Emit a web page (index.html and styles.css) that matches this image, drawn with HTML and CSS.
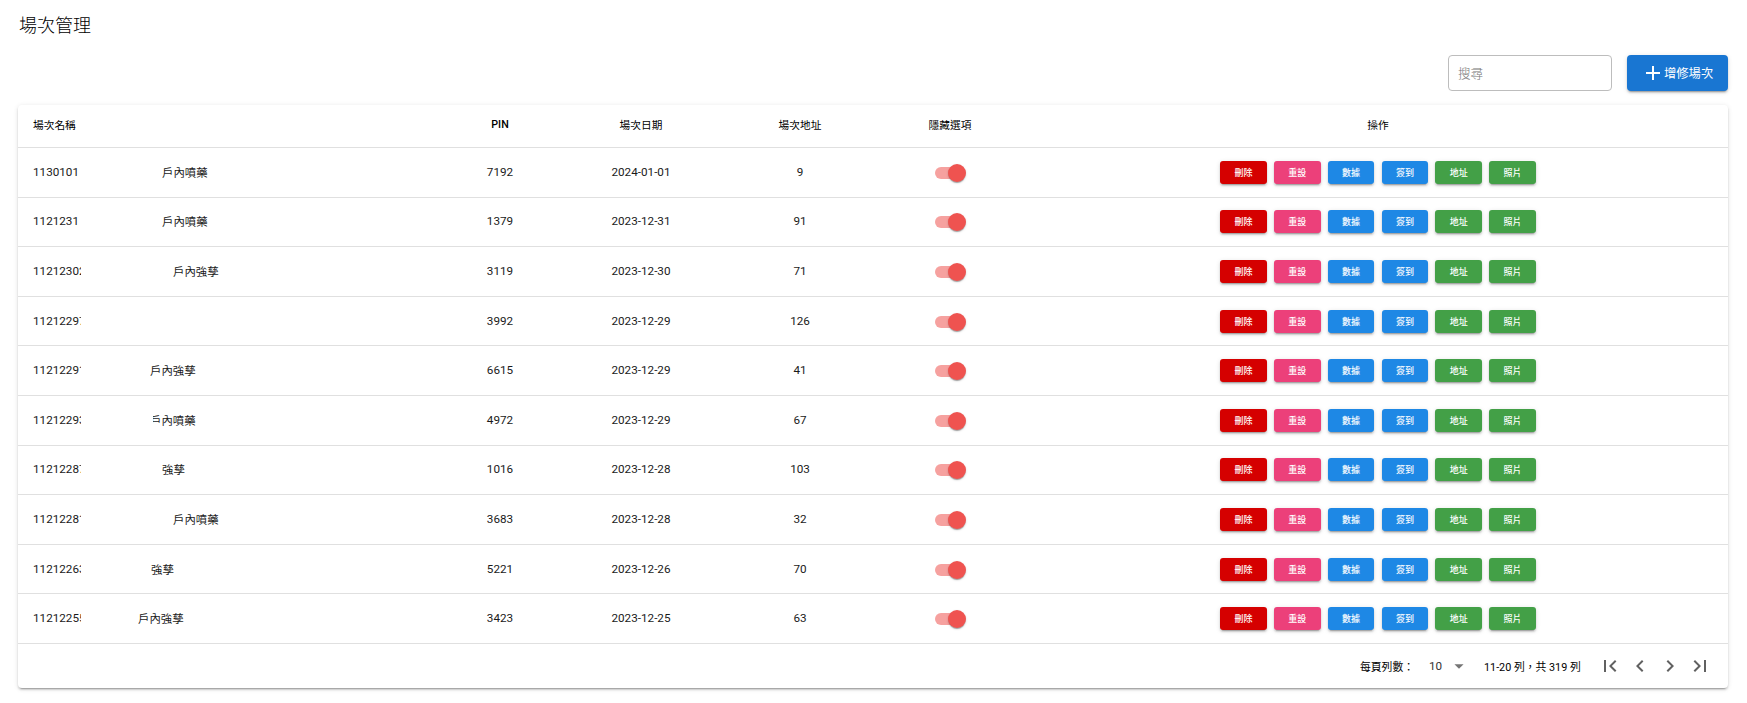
FILE: index.html
```html
<!DOCTYPE html>
<html lang="zh-Hant">
<head>
<meta charset="utf-8">
<title>場次管理</title>
<link rel="stylesheet" href="styles.css">
</head>
<body>
<main class="page">
  <h1 class="title">場次管理</h1>
  <div class="toolbar">
    <input class="search" type="text" placeholder="搜尋">
    <button class="add" type="button">
      <svg class="add-icon" viewBox="0 0 14 14"><path d="M6 0h2v6h6v2H8v6H6V8H0V6h6z"/></svg>
      <span>增修場次</span>
    </button>
  </div>
  <section class="card">
    <div class="row head">
      <div class="name">場次名稱</div>
      <div class="c pin-head">PIN</div>
      <div class="c">場次日期</div>
      <div class="c">場次地址</div>
      <div class="c">隱藏選項</div>
      <div class="c">操作</div>
    </div>

    <div class="row">
      <div class="name"><span class="id">1130101</span><span class="note" style="margin-left:81px">戶內噴藥</span></div>
      <div class="c">7192</div><div class="c">2024-01-01</div><div class="c">9</div>
      <div class="c"><span class="switch"><i class="track"></i><i class="thumb"></i></span></div>
      <div class="actions"><span class="btn red">刪除</span><span class="btn pink">重設</span><span class="btn blue">數據</span><span class="btn blue">簽到</span><span class="btn green">地址</span><span class="btn green">照片</span></div>
    </div>
    <div class="row">
      <div class="name"><span class="id">1121231</span><span class="note" style="margin-left:81px">戶內噴藥</span></div>
      <div class="c">1379</div><div class="c">2023-12-31</div><div class="c">91</div>
      <div class="c"><span class="switch"><i class="track"></i><i class="thumb"></i></span></div>
      <div class="actions"><span class="btn red">刪除</span><span class="btn pink">重設</span><span class="btn blue">數據</span><span class="btn blue">簽到</span><span class="btn green">地址</span><span class="btn green">照片</span></div>
    </div>
    <div class="row">
      <div class="name"><span class="id">11212302</span><span class="note" style="margin-left:92px">戶內強孳</span></div>
      <div class="c">3119</div><div class="c">2023-12-30</div><div class="c">71</div>
      <div class="c"><span class="switch"><i class="track"></i><i class="thumb"></i></span></div>
      <div class="actions"><span class="btn red">刪除</span><span class="btn pink">重設</span><span class="btn blue">數據</span><span class="btn blue">簽到</span><span class="btn green">地址</span><span class="btn green">照片</span></div>
    </div>
    <div class="row">
      <div class="name"><span class="id">11212297</span></div>
      <div class="c">3992</div><div class="c">2023-12-29</div><div class="c">126</div>
      <div class="c"><span class="switch"><i class="track"></i><i class="thumb"></i></span></div>
      <div class="actions"><span class="btn red">刪除</span><span class="btn pink">重設</span><span class="btn blue">數據</span><span class="btn blue">簽到</span><span class="btn green">地址</span><span class="btn green">照片</span></div>
    </div>
    <div class="row">
      <div class="name"><span class="id">11212291</span><span class="note" style="margin-left:69px">戶內強孳</span></div>
      <div class="c">6615</div><div class="c">2023-12-29</div><div class="c">41</div>
      <div class="c"><span class="switch"><i class="track"></i><i class="thumb"></i></span></div>
      <div class="actions"><span class="btn red">刪除</span><span class="btn pink">重設</span><span class="btn blue">數據</span><span class="btn blue">簽到</span><span class="btn green">地址</span><span class="btn green">照片</span></div>
    </div>
    <div class="row">
      <div class="name"><span class="id">11212293</span><span class="note" style="margin-left:72px;text-indent:-3px">戶內噴藥</span></div>
      <div class="c">4972</div><div class="c">2023-12-29</div><div class="c">67</div>
      <div class="c"><span class="switch"><i class="track"></i><i class="thumb"></i></span></div>
      <div class="actions"><span class="btn red">刪除</span><span class="btn pink">重設</span><span class="btn blue">數據</span><span class="btn blue">簽到</span><span class="btn green">地址</span><span class="btn green">照片</span></div>
    </div>
    <div class="row">
      <div class="name"><span class="id">11212287</span><span class="note" style="margin-left:81px">強孳</span></div>
      <div class="c">1016</div><div class="c">2023-12-28</div><div class="c">103</div>
      <div class="c"><span class="switch"><i class="track"></i><i class="thumb"></i></span></div>
      <div class="actions"><span class="btn red">刪除</span><span class="btn pink">重設</span><span class="btn blue">數據</span><span class="btn blue">簽到</span><span class="btn green">地址</span><span class="btn green">照片</span></div>
    </div>
    <div class="row">
      <div class="name"><span class="id">11212281</span><span class="note" style="margin-left:92px">戶內噴藥</span></div>
      <div class="c">3683</div><div class="c">2023-12-28</div><div class="c">32</div>
      <div class="c"><span class="switch"><i class="track"></i><i class="thumb"></i></span></div>
      <div class="actions"><span class="btn red">刪除</span><span class="btn pink">重設</span><span class="btn blue">數據</span><span class="btn blue">簽到</span><span class="btn green">地址</span><span class="btn green">照片</span></div>
    </div>
    <div class="row">
      <div class="name"><span class="id">11212263</span><span class="note" style="margin-left:70px">強孳</span></div>
      <div class="c">5221</div><div class="c">2023-12-26</div><div class="c">70</div>
      <div class="c"><span class="switch"><i class="track"></i><i class="thumb"></i></span></div>
      <div class="actions"><span class="btn red">刪除</span><span class="btn pink">重設</span><span class="btn blue">數據</span><span class="btn blue">簽到</span><span class="btn green">地址</span><span class="btn green">照片</span></div>
    </div>
    <div class="row">
      <div class="name"><span class="id">11212255</span><span class="note" style="margin-left:57px">戶內強孳</span></div>
      <div class="c">3423</div><div class="c">2023-12-25</div><div class="c">63</div>
      <div class="c"><span class="switch"><i class="track"></i><i class="thumb"></i></span></div>
      <div class="actions"><span class="btn red">刪除</span><span class="btn pink">重設</span><span class="btn blue">數據</span><span class="btn blue">簽到</span><span class="btn green">地址</span><span class="btn green">照片</span></div>
    </div>

    <footer class="pager">
      <span class="pager-label">每頁列數：</span>
      <span class="pager-size">10<svg class="caret" viewBox="0 0 24 24"><path d="M7 10l5 5 5-5z"/></svg></span>
      <span class="pager-range">11-20 列，共 319 列</span>
      <span class="pager-nav">
        <svg class="nav-icon" viewBox="0 0 24 24"><path d="M18.41 16.59L13.82 12l4.59-4.59L17 6l-6 6 6 6zM6 6h2v12H6z"/></svg>
        <svg class="nav-icon" viewBox="0 0 24 24"><path d="M15.41 7.41L14 6l-6 6 6 6 1.41-1.41L10.83 12z"/></svg>
        <svg class="nav-icon" viewBox="0 0 24 24"><path d="M10 6L8.59 7.41 13.17 12l-4.58 4.59L10 18l6-6z"/></svg>
        <svg class="nav-icon" viewBox="0 0 24 24"><path d="M5.59 7.41L10.18 12l-4.59 4.59L7 18l6-6-6-6zM16 6h2v12h-2z"/></svg>
      </span>
    </footer>
  </section>
</main>
</body>
</html>
```

FILE: styles.css
```css
* { box-sizing: border-box; }

html, body { margin: 0; background: #fff; }

body {
  font-family: Roboto, "Noto Sans CJK TC", sans-serif;
  font-size: 11.7px;
  color: #1a1a1a;
}

.page { padding: 14px 19px 15px 18px; }

.title {
  margin: 0 0 0 1px;
  height: 23px;
  font-size: 18px;
  line-height: 23px;
  font-weight: 300;
  color: #000;
}

.toolbar {
  display: flex;
  justify-content: flex-end;
  gap: 15px;
  margin-top: 18px;
  height: 36px;
}

.search {
  width: 164px;
  height: 36px;
  padding: 0 9px;
  border: 1px solid #bdbdbd;
  border-radius: 4px;
  font: inherit;
  font-size: 12.6px;
  font-weight: 300;
  outline: none;
}
.search::placeholder { color: #757575; opacity: 1; }

.add {
  display: flex;
  align-items: center;
  width: 101px;
  height: 36px;
  padding: 0 0 0 19px;
  gap: 4px;
  border: 0;
  border-radius: 4px;
  background: #1976d2;
  color: #fff;
  font: inherit;
  font-size: 12.3px;
  box-shadow: 0 3px 1px -2px rgba(0,0,0,.2), 0 2px 2px rgba(0,0,0,.14), 0 1px 5px rgba(0,0,0,.12);
}
.add-icon { width: 14px; height: 14px; fill: #fff; flex: none; }

.card {
  margin-top: 14px;
  border-radius: 4px;
  background: #fff;
  box-shadow: 0 3px 1px -2px rgba(0,0,0,.2), 0 2px 2px rgba(0,0,0,.14), 0 1px 5px rgba(0,0,0,.12);
}

.row {
  display: grid;
  grid-template-columns: 428px 108px 174px 144px 156px 1fr;
  align-items: center;
  height: 49.6px;
  padding-bottom: 1px;
  border-bottom: 1px solid #e0e0e0;
}

.head {
  height: 43px;
  padding-bottom: 4px;
  font-size: 10.7px;
  color: #000;
}
.pin-head { font-weight: 500; }

.name {
  display: flex;
  align-items: center;
  padding-left: 15px;
  white-space: nowrap;
}
.id { width: 48px; overflow: hidden; flex: none; }
.note { overflow: hidden; font-size: 11.4px; }

.c { text-align: center; }

.switch {
  position: relative;
  display: inline-block;
  width: 31px;
  height: 18px;
  vertical-align: middle;
  top: 1px;
}
.track {
  position: absolute;
  left: 0;
  top: 3px;
  width: 28px;
  height: 12px;
  border-radius: 6px;
  background: #ef5350;
  opacity: .55;
}
.thumb {
  position: absolute;
  right: 0;
  top: 0;
  width: 18px;
  height: 18px;
  border-radius: 50%;
  background: #ef5350;
  box-shadow: 0 2px 1px -1px rgba(0,0,0,.2), 0 1px 1px rgba(0,0,0,.14), 0 1px 3px rgba(0,0,0,.12);
}

.actions {
  display: flex;
  justify-content: center;
  gap: 7.3px;
  margin-top: 1px;
}
.btn {
  display: flex;
  align-items: center;
  justify-content: center;
  width: 46.5px;
  height: 23px;
  border-radius: 3px;
  color: #fff;
  font-size: 9px;
  font-weight: 500;
  box-shadow: 0 3px 1px -2px rgba(0,0,0,.2), 0 2px 2px rgba(0,0,0,.14), 0 1px 5px rgba(0,0,0,.12);
}
.red { background: #d50000; }
.pink { background: #ec407a; }
.blue { background: #1e88e5; }
.green { background: #43a047; }

.pager {
  display: flex;
  align-items: center;
  justify-content: flex-end;
  height: 44px;
  padding-right: 16px;
  font-size: 10.8px;
  color: #000;
}
.pager-label { width: 69px; }
.pager-size {
  display: flex;
  align-items: center;
  width: 55px;
  font-size: 11.7px;
  color: #333;
}
.caret { width: 22px; height: 22px; margin-left: 6px; fill: #757575; }
.pager-range { width: 114px; }
.pager-nav { display: flex; gap: 6px; }
.nav-icon { width: 24px; height: 24px; fill: #616161; }
```
